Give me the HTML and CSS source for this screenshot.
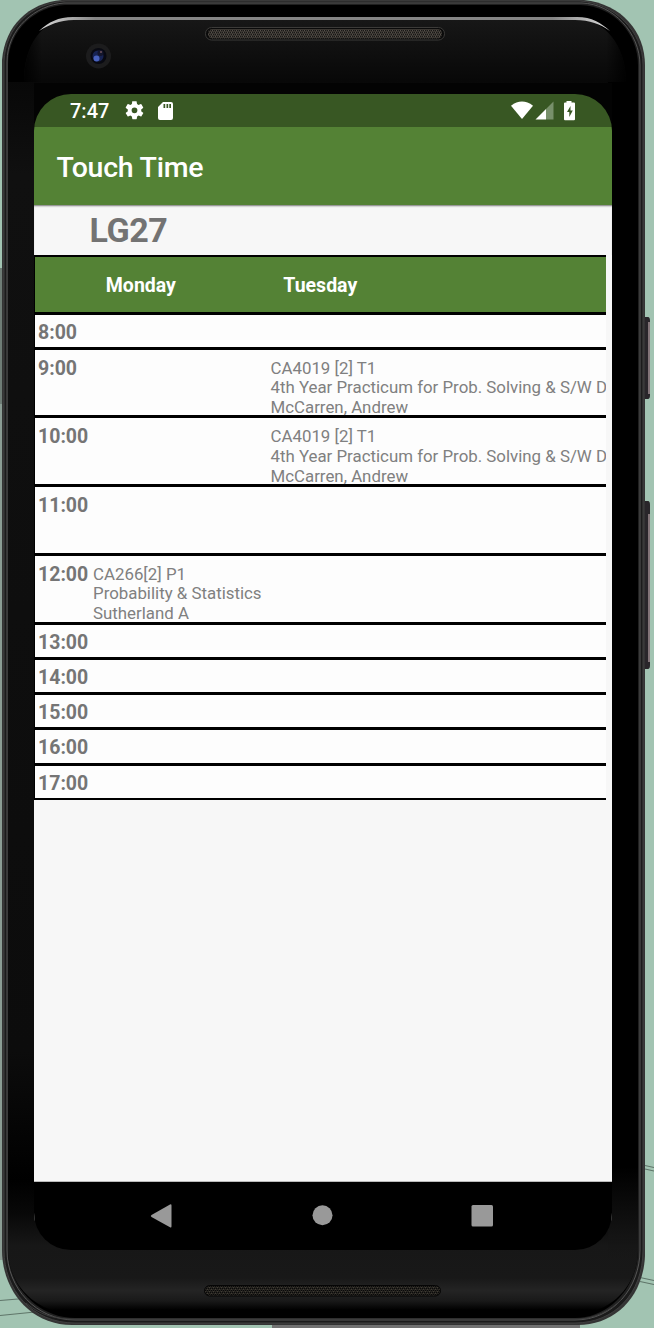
FILE: index.html
```
<!DOCTYPE html>
<html lang="en">
<head>
<meta charset="utf-8">
<title>Touch Time</title>
<link rel="stylesheet" href="styles.css">
</head>
<body>
<main class="stage">
<svg class="device" width="654" height="1328" viewBox="0 0 654 1328" aria-hidden="true">
  <defs>
    <linearGradient id="face" x1="0" y1="20" x2="0" y2="1310" gradientUnits="userSpaceOnUse">
      <stop offset="0" stop-color="#171717"/><stop offset=".047" stop-color="#080808"/><stop offset=".12" stop-color="#101010"/><stop offset=".8" stop-color="#0c0c0c"/><stop offset=".9" stop-color="#000"/><stop offset=".925" stop-color="#080808"/><stop offset=".95" stop-color="#171717"/><stop offset=".975" stop-color="#181818"/><stop offset=".985" stop-color="#242424"/><stop offset=".993" stop-color="#191919"/><stop offset="1" stop-color="#000"/>
    </linearGradient>
    <linearGradient id="side" x1="0" y1="94" x2="0" y2="1260" gradientUnits="userSpaceOnUse">
      <stop offset="0" stop-color="#000"/><stop offset=".92" stop-color="#000"/><stop offset=".98" stop-color="#141414"/><stop offset="1" stop-color="#171717" stop-opacity="0"/>
    </linearGradient>
    <linearGradient id="fadeLeft"><stop offset="0" stop-color="#000"/><stop offset="1" stop-color="#000" stop-opacity="0"/></linearGradient>
    <linearGradient id="fadeRight"><stop offset="0" stop-color="#000" stop-opacity="0"/><stop offset="1" stop-color="#000"/></linearGradient>
    <clipPath id="glass"><path d="M70 19H578C604 19 626 45 626 82H24C24 45 42 19 70 19z"/></clipPath>
    <linearGradient id="shine" x1="38" y1="0" x2="610" y2="0" gradientUnits="userSpaceOnUse">
      <stop offset="0" stop-color="#ddd"/><stop offset=".1" stop-color="#858585"/><stop offset=".9" stop-color="#858585"/><stop offset="1" stop-color="#ddd"/>
    </linearGradient>
    <pattern id="mesh" width="4" height="4" patternUnits="userSpaceOnUse">
      <rect width="4" height="4" fill="#3b3732"/><path d="M0 0h1v1H0zM2 0h1v1H2zM1 2h1v1H1zM3 2h1v1H3z" fill="#181716"/><path d="M3 0h1v1H3zM0 2h1v1H0z" fill="#55504a"/>
    </pattern>
    <pattern id="mesh2" width="4" height="4" patternUnits="userSpaceOnUse">
      <rect width="4" height="4" fill="#25231f"/><path d="M0 0h1v1H0zM2 0h1v1H2zM1 2h1v1H1zM3 2h1v1H3z" fill="#090909"/><path d="M3 1h1v1H3zM1 3h1v1H1z" fill="#403c34"/>
    </pattern>
  </defs>
  <g fill="none" stroke="#5f7569" stroke-width="1.200">
    <path d="M0 1300.500L30 1298M0 1315.500L45 1311M645 1165.500L654 1167.500M645 1169L654 1171M640 1277.500L654 1280.500M640 1281.500L654 1284.500"/>
  </g>
  <path d="M0 268H4V404H0z" fill="#6f7d76"/>
  <path d="M0 404H4V1260H0z" fill="#8b9d94"/>
  <path d="M272 1320H580V1328H272z" fill="#727272"/>
  <path d="M645 317h3q2 0 2 4v74q0 4-2 4h-3zM645 501h3q2 0 2 4v160q0 4-2 4h-3z" fill="#29262a"/>
  <path d="M649 322v72M649 514v148" stroke="#a08f93" stroke-width="1.500"/>
  <path d="M62 0H584C622 4 645 32 645 65V1256C643 1298 614 1325 578 1325H72C30 1325 2 1290 2 1250V60C5 26 28 3 62 0z" fill="#343434"/>
  <path d="M66 1H580C614 3 643 31 643 65V1250C643 1294 614 1323 575 1323H75C32 1323 4 1290 4 1250V62C5 27 31 3 66 1z" fill="#1b1b1b" stroke="#404040"/>
  <path d="M64 3H582C613 4 640 33 640 65V1250C640 1288 613 1320 575 1320H75C36 1320 7 1288 7 1250V62C7 28 36 5 64 3z" fill="#202020" stroke="#565656"/>
  <path d="M65 5H580C614 6 638 34 638 65V1250C638 1286 610 1318 575 1318H75C38 1318 8 1286 8 1250V64C8 29 37 6 65 5z" fill="#000"/>
  <path d="M70 19H578C604 19 626 45 626 82V94H638V1250C638 1286 610 1314 575 1314H75C38 1314 8 1286 8 1250V82H24C24 45 42 19 70 19z" fill="url(#face)"/>
  <path d="M608 82H638V1260H608z" fill="url(#side)"/>
  <g clip-path="url(#glass)">
    <path d="M22 18H42V82H22z" fill="url(#fadeLeft)"/>
    <path d="M606 18H628V82H606z" fill="url(#fadeRight)"/>
  </g>
  <path d="M34 83H612V140H34z" fill="#030303"/>
  <path d="M39 31C49 22 58 17 73 17H577C592 17 601 23 610 31C600 24 590 20 575 20H74C59 20 49 25 39 31z" fill="url(#shine)"/>
  <rect x="205.500" y="27.500" width="239" height="12.500" rx="6" fill="#0a0a0a" stroke="#3b3a38"/>
  <rect x="208" y="29" width="234" height="9.500" rx="4.500" fill="url(#mesh)"/>
  <circle cx="98.500" cy="56" r="12.500" fill="#1c1c1d"/>
  <circle cx="98.500" cy="56" r="8" fill="#080911"/><circle cx="98" cy="56" r="5.500" fill="#172353"/><circle cx="96.500" cy="58.500" r="3" fill="#4861bd"/><circle cx="100.500" cy="53" r="3" fill="#14162c"/><circle cx="101" cy="52" r="1" fill="#6d515b"/>
  <rect x="204.500" y="1285.500" width="236" height="10.500" rx="5.200" fill="url(#mesh2)" stroke="#050505"/>
  <path d="M26 1303C39 1314 53 1319 72 1319H578C594 1319 611 1310 621 1300" fill="none" stroke="#3c3c3c"/>
</svg>
<section class="screen">
  <header class="status">
    <span class="clock">7:47</span>
    <svg class="gear" width="21" height="21" viewBox="1.500 1.500 21 21"><path fill="#fff" fill-rule="evenodd" d="M19.400 13c.1-.3.100-.700.100-1s0-.700-.100-1l2.100-1.600c.2-.2.300-.4.100-.7l-2-3.400c-.1-.2-.4-.3-.6-.2l-2.500 1c-.5-.4-1.100-.7-1.700-1l-.4-2.600c0-.3-.2-.5-.5-.5h-4c-.3 0-.5.2-.5.5L9.100 5.100c-.6.3-1.200.6-1.700 1l-2.500-1c-.2-.1-.5 0-.6.200l-2 3.400c-.1.300-.1.500.1.700L4.600 11c-.1.300-.1.700-.1 1s0 .7.100 1l-2.200 1.600c-.2.200-.2.400-.1.700l2 3.400c.1.200.4.300.6.200l2.500-1c.5.400 1.100.7 1.700 1l.4 2.600c0 .3.200.5.500.5h4c.3 0 .5-.2.500-.5l.4-2.600c.6-.3 1.200-.6 1.700-1l2.500 1c.2.100.5 0 .6-.2l2-3.400c.2-.3.100-.5-.1-.7zM12 15.200a3.200 3.200 0 1 1 0-6.400 3.200 3.200 0 0 1 0 6.400z" transform="translate(1.200 1) scale(.9)"/></svg>
    <svg class="card" width="15" height="18" viewBox="0 0 15 18"><path fill="#fff" fill-rule="evenodd" d="M5 0h8q2 0 2 2v14q0 2-2 2H2q-2 0-2-2V5zM5.500 2v4h1.700V2zM8.500 2v4h1.700V2zM11.300 2v4H13V2z"/></svg>
    <svg class="signals" width="65" height="20" viewBox="0 0 65 20"><path fill="#fff" d="M0 4.700Q11-3.700 22 4.700L11 18z"/><path fill="#fff" d="M24.500 18.500L35 8v10.500z"/><path fill="#78906b" d="M35 8l7.500-7.500v18H35z"/><path fill="#fff" fill-rule="evenodd" d="M55.500 0h5v1.500H63q1 0 1 1v15.700q0 1-1 1h-9q-1 0-1-1V2.500q0-1 1-1h1.500zM59.500 5l-3.500 6h2.300v5l3.500-6.500h-2.300z"/></svg>
  </header>
  <h1 class="appbar">Touch Time</h1>
  <h2 class="room">LG27</h2>
  <div class="timetable">
    <div class="row days"><span></span><b class="day">Monday</b><b class="day">Tuesday</b></div>
    <div class="row"><b>8:00</b></div>
    <div class="row tall"><b>9:00</b><p></p><p>CA4019 [2] T1<br>4th Year Practicum for Prob. Solving &amp; S/W D<br>McCarren, Andrew</p></div>
    <div class="row tall"><b>10:00</b><p></p><p>CA4019 [2] T1<br>4th Year Practicum for Prob. Solving &amp; S/W D<br>McCarren, Andrew</p></div>
    <div class="row tall"><b>11:00</b></div>
    <div class="row tall"><b>12:00</b><p>CA266[2] P1<br>Probability &amp; Statistics<br>Sutherland A</p></div>
    <div class="row"><b>13:00</b></div>
    <div class="row"><b>14:00</b></div>
    <div class="row"><b>15:00</b></div>
    <div class="row"><b>16:00</b></div>
    <div class="row last"><b>17:00</b></div>
  </div>
  <nav class="nav">
    <svg width="578" height="68" viewBox="0 0 578 68"><g fill="#999"><path d="M117.500 33L136 22.500q1.500-.7 1.500 1v20.800q0 1.700-1.500 1L117.500 35q-1.500-1 0-2z"/><circle cx="288.500" cy="33.300" r="10"/><rect x="437.500" y="23" width="21.500" height="21.500" rx="1.500"/></g></svg>
  </nav>
</section>
</main>
</body>
</html>
```
FILE: styles.css
```
* { box-sizing: border-box; margin: 0; }
body { background: #a2c4b2; font-family: Roboto, "Liberation Sans", sans-serif; overflow: hidden; }
.stage { position: relative; width: 654px; height: 1328px; padding: 94px 42px 78px 34px; }
.device { position: absolute; inset: 0; }
.screen { position: relative; width: 578px; height: 1156px; display: flex; flex-direction: column; border-radius: 37px; overflow: hidden; background: linear-gradient(transparent 60px, #f7f7f7 60px, #f7f7f7 1088px, transparent 1088px); }
.status { height: 33px; flex: none; background: #385723; color: #fff; display: flex; align-items: center; padding: 0 36px; }
.clock { font-size: 20px; font-weight: 500; width: 54px; }
.card { margin-left: 13px; }
.signals { margin-left: auto; }
.appbar { height: 78px; flex: none; background: #548235; color: #fff; font-size: 28.500px; font-weight: 500; line-height: 81px; letter-spacing: -.250px; padding-left: 22.500px; }
.room { height: 50px; flex: none; box-shadow: inset 0 2px 2px -1px #777; padding-left: 55.500px; color: #737373; font-size: 34px; line-height: 50px; font-weight: 700; letter-spacing: -.4px; }
.timetable { width: 572px; border: solid #000; border-width: 2px 0 0 1px; flex: none; background: #fdfdfd; overflow: hidden; }
.row { height: 35.300px; display: grid; grid-template-columns: 55px 177.500px 335px; padding-left: 3px; border-bottom: 3px solid #000; color: #757575; }
.row b { font-size: 19.500px; line-height: 36px; font-weight: 700; }
.row p { font-size: 16.850px; font-weight: 400; line-height: 19.600px; padding-top: 9px; white-space: nowrap; color: #808080; }
.tall { height: 68.700px; }
.tall b { line-height: 37px; }
.days { height: 57.500px; background: #548235; }
.days .day { color: #fff; line-height: 57px; padding-left: 12.800px; }
.last { border-bottom-width: 2px; height: 34.500px; }
.nav { height: 68px; margin-top: auto; background: #000; flex: none; box-shadow: 0 -1px #bbb; }
.nav svg { display: block; }
```
